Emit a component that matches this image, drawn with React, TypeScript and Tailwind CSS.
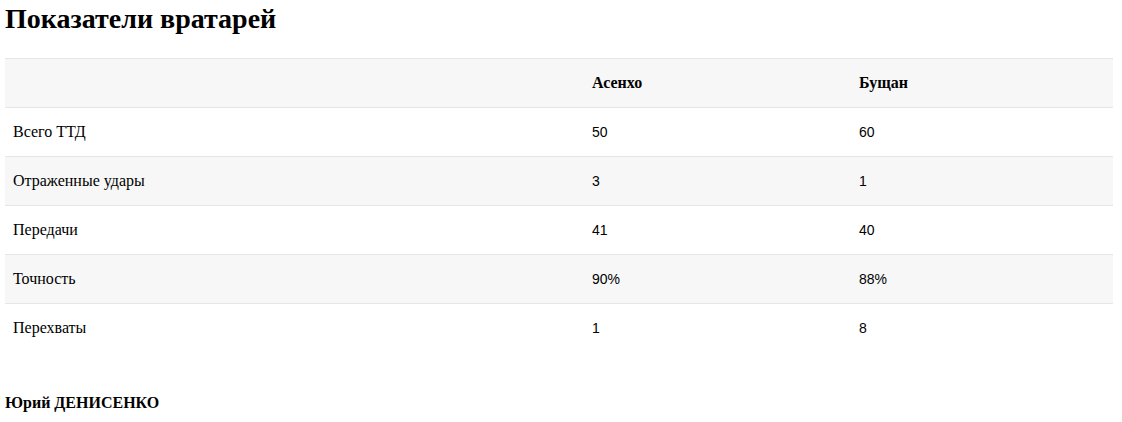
const rows = [
  { label: "Всего ТТД", a: "50", b: "60" },
  { label: "Отраженные удары", a: "3", b: "1" },
  { label: "Передачи", a: "41", b: "40" },
  { label: "Точность", a: "90%", b: "88%" },
  { label: "Перехваты", a: "1", b: "8" },
]

export default function App() {
  return (
    <div className="min-h-[422px] bg-white pl-[5px] pr-[9px] text-black font-['Liberation_Serif',serif]">
      <h2 className="mt-[2px] text-[28px] leading-[34px] font-bold">Показатели вратарей</h2>

      <div className="mt-[22px] w-[1108px]">
        <div className="grid grid-cols-[579px_267px_262px] h-[49px] items-center border-t border-[#e6e6e6] bg-[#f7f7f7] text-[16px] font-bold">
          <div className="px-2" />
          <div className="px-2">Асенхо</div>
          <div className="px-2">Бущан</div>
        </div>
        {rows.map((r, i) => (
          <div
            key={i}
            className={`grid grid-cols-[579px_267px_262px] h-[49px] items-center border-t border-[#e6e6e6] ${i % 2 === 1 ? "bg-[#f7f7f7]" : "bg-white"}`}
          >
            <div className="px-2 text-[16px]">{r.label}</div>
            <div className="px-2 text-[14px] font-['Liberation_Sans',sans-serif]">{r.a}</div>
            <div className="px-2 text-[14px] font-['Liberation_Sans',sans-serif]">{r.b}</div>
          </div>
        ))}
      </div>

      <p className="mt-[41px] text-[16px] leading-[20px] font-bold">Юрий ДЕНИСЕНКО</p>
    </div>
  )
}
